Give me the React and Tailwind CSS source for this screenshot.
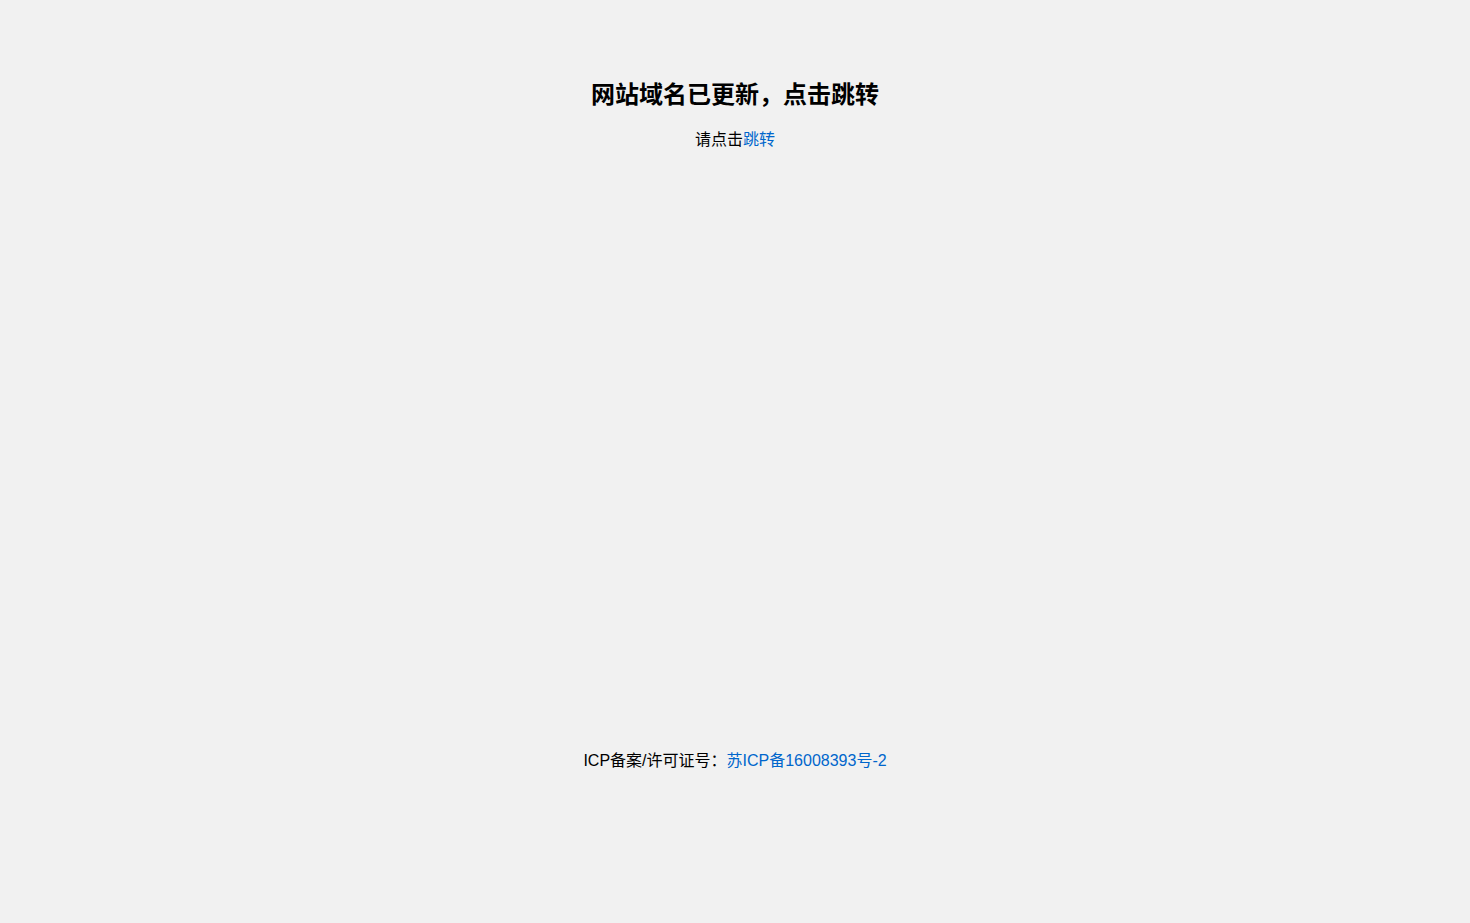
import React from "react";

const App = () => {
  return (
    <div
      className="min-h-screen bg-[#f1f1f1] text-black text-center"
      style={{ fontFamily: '"Liberation Sans", Arial, "Noto Sans CJK SC", sans-serif' }}
    >
      <div className="pt-[79px]">
        <h1 className="text-2xl leading-8 font-bold">网站域名已更新，点击跳转</h1>
        <p className="mt-[17px] text-base leading-6">
          请点击
          <a href="#" className="text-[#0066cc]">
            跳转
          </a>
        </p>
      </div>

      <footer className="mt-[597px] text-base leading-6">
        ICP备案/许可证号：
        <a href="#" className="text-[#0066cc]">
          苏ICP备16008393号-2
        </a>
      </footer>
    </div>
  );
};

export default App;
